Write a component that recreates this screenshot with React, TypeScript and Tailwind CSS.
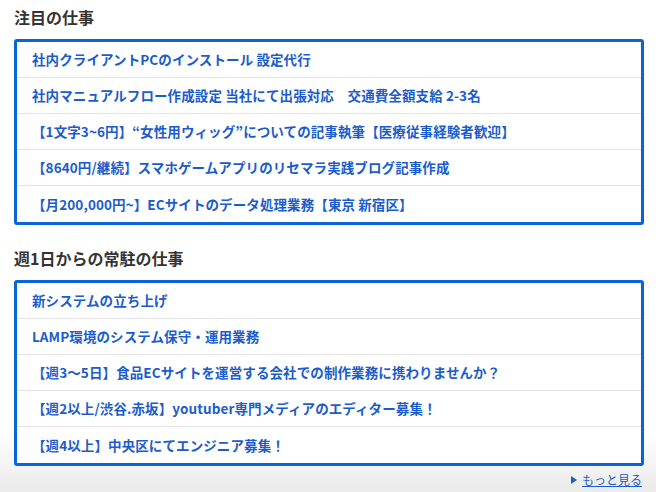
import React from 'react';

const featuredJobs = [
  '社内クライアントPCのインストール 設定代行',
  '社内マニュアルフロー作成設定 当社にて出張対応　交通費全額支給 2-3名',
  '【1文字3~6円】“女性用ウィッグ”についての記事執筆【医療従事経験者歓迎】',
  '【8640円/継続】スマホゲームアプリのリセマラ実践ブログ記事作成',
  '【月200,000円~】ECサイトのデータ処理業務【東京 新宿区】',
];

const residentJobs = [
  '新システムの立ち上げ',
  'LAMP環境のシステム保守・運用業務',
  '【週3～5日】食品ECサイトを運営する会社での制作業務に携わりませんか？',
  '【週2以上/渋谷.赤坂】youtuber専門メディアのエディター募集！',
  '【週4以上】中央区にてエンジニア募集！',
];

const font = { fontFamily: '"Noto Sans CJK JP", "Noto Sans", sans-serif' };

const JobSection: React.FC<{ title: string; jobs: string[]; className?: string }> = ({ title, jobs, className }) => (
  <section className={className}>
    <h2 className="h-[22px] leading-[22px] text-[16px] font-bold text-[#333] mb-[11px]">{title}</h2>
    <ul className="border-[3px] border-[#0a64d6] rounded-[3px] bg-white">
      {jobs.map((job, i) => (
        <li
          key={i}
          className={`h-9 flex items-center pl-[15px] ${i < jobs.length - 1 ? 'border-b border-[#e2e2e2]' : ''}`}
        >
          <a className="text-[13.5px] font-bold text-[#1b5ccc] tracking-[0.1px] whitespace-nowrap cursor-pointer">
            {job}
          </a>
        </li>
      ))}
    </ul>
  </section>
);

export default function App() {
  return (
    <div
      className="w-[656px] h-[492px] px-[12px] pt-[6px] bg-gradient-to-b from-white from-[88%] to-[#eaeaea] overflow-hidden"
      style={font}
    >
      <div className="ml-[2px] w-[630px]">
        <JobSection title="注目の仕事" jobs={featuredJobs} />
        <JobSection title="週1日からの常駐の仕事" jobs={residentJobs} className="mt-[22px]" />
        <div className="flex justify-end items-center gap-[5px] mt-[5px] pr-[2px]">
          <span className="w-0 h-0 border-y-[4px] border-y-transparent border-l-[6px] border-l-[#1b5ccc]" />
          <a className="text-[12px] text-[#1b5ccc] underline leading-[18px] cursor-pointer">もっと見る</a>
        </div>
      </div>
    </div>
  );
}
